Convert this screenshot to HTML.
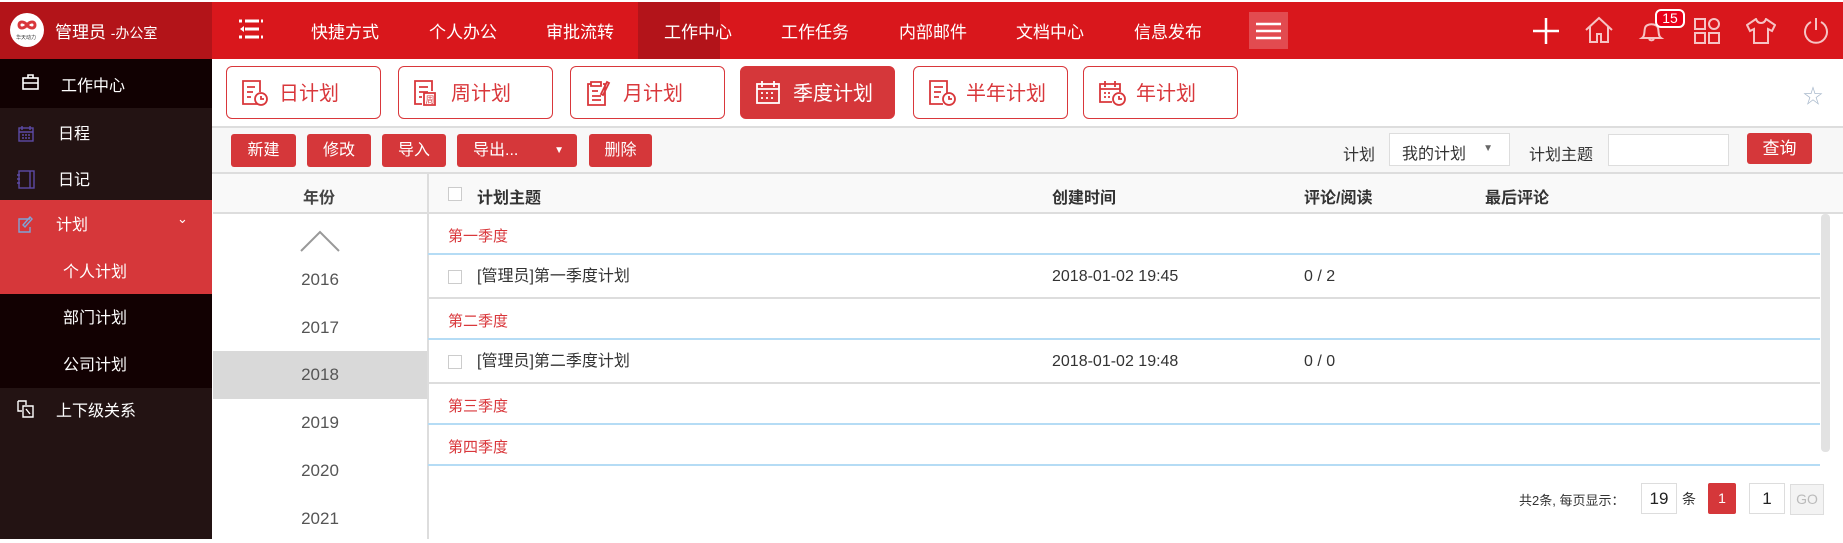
<!DOCTYPE html>
<html><head><meta charset="utf-8"><style>
*{margin:0;padding:0;box-sizing:border-box}
body{width:1843px;height:539px;overflow:hidden;background:#fff;font-family:"Liberation Sans","Noto Sans CJK SC",sans-serif;position:relative}
.a{position:absolute}
.nav{color:#fff;font-size:17px;top:18px}
.side{color:#fff;font-size:16px}
.tab{position:absolute;top:66px;height:53px;width:155px;border:1px solid #d9373b;border-radius:6px;color:#d9373b;font-size:20px;background:#fff}
.tab span{position:absolute;left:52px;top:10px}
.tab svg{position:absolute;left:14px;top:12px}
.btn{position:absolute;top:134px;height:33px;background:#d5373a;border-radius:3px;color:#fff;font-size:16px;text-align:center;line-height:33px}
.yr{position:absolute;left:213px;width:214px;text-align:center;font-size:17px;color:#555;height:48px;line-height:48px}
.grp{position:absolute;left:428px;width:1392px;color:#d9373b;font-size:15px;border-bottom:2px solid #b5dcf5}
.row{position:absolute;left:428px;width:1392px;color:#333;font-size:16px;border-bottom:2px solid #ddd}
.row span{line-height:22px}
.cb{position:absolute;width:14px;height:14px;border:1px solid #ccc;background:#fff}
</style></head><body>
<!-- top bar -->
<div class="a" style="left:0;top:2px;width:212px;height:57px;background:#b31419"></div>
<div class="a" style="left:212px;top:2px;width:1631px;height:57px;background:#d9171c"></div>
<div class="a" style="left:638px;top:2px;width:82px;height:57px;background:#b3141a"></div>
<div class="a" style="left:10px;top:13px;width:34px;height:34px;border-radius:50%;background:#fff"></div>
<svg class="a" style="left:14px;top:18px" width="26" height="14"><path d="M13 7c-3-4-8-4-8 0s5 4 8 0c3-4 8-4 8 0s-5 4-8 0" fill="none" stroke="#d9373b" stroke-width="3"/></svg>
<div class="a" style="left:16px;top:34px;font-size:5px;color:#333">华天动力</div>
<div class="a" style="left:55px;top:18px;color:#fff;font-size:17px">管理员 <span style="font-size:14px">-办公室</span></div>
<svg class="a" style="left:239px;top:19px" width="24" height="21"><g stroke="#fff" stroke-width="3"><line x1="6" y1="2" x2="20" y2="2"/><line x1="6" y1="10" x2="20" y2="10"/><line x1="6" y1="18" x2="20" y2="18"/></g><g fill="#fff"><rect x="0" y="0.5" width="3" height="3"/><rect x="22" y="0.5" width="2" height="3"/><rect x="22" y="16.5" width="2" height="3"/><rect x="0" y="16.5" width="3" height="3"/><path d="M1 10l4-3v6z"/></g></svg>
<div class="a nav" style="left:311px">快捷方式</div>
<div class="a nav" style="left:429px">个人办公</div>
<div class="a nav" style="left:546px">审批流转</div>
<div class="a nav" style="left:664px">工作中心</div>
<div class="a nav" style="left:781px">工作任务</div>
<div class="a nav" style="left:899px">内部邮件</div>
<div class="a nav" style="left:1016px">文档中心</div>
<div class="a nav" style="left:1134px">信息发布</div>
<div class="a" style="left:1249px;top:12px;width:39px;height:37px;background:#e24b50"></div>
<svg class="a" style="left:1256px;top:22px" width="25" height="18"><g stroke="#fff" stroke-width="2.4"><line x1="0" y1="2" x2="25" y2="2"/><line x1="0" y1="9" x2="25" y2="9"/><line x1="0" y1="16" x2="25" y2="16"/></g></svg>
<svg class="a" style="left:1533px;top:18px" width="26" height="26"><g stroke="#fff" stroke-width="2.5"><line x1="13" y1="0" x2="13" y2="26"/><line x1="0" y1="13" x2="26" y2="13"/></g></svg>
<svg class="a" style="left:1584px;top:16px" width="30" height="28" fill="none" stroke="#f6c3c4" stroke-width="2"><path d="M2 14L15 2l13 12M6 11v15h7v-8h4v8h7V11"/></svg>
<svg class="a" style="left:1638px;top:20px" width="30" height="24" fill="none" stroke="#f6c3c4" stroke-width="2"><path d="M4 18c3-2 2-6 3-10 1-5 12-5 13 0 1 4 0 8 3 10zM11 19a3 3 0 0 0 5 0"/></svg>
<div class="a" style="left:1655px;top:9px;width:30px;height:19px;background:#e8001a;border:2px solid #fff;border-radius:6px;color:#fff;font-size:14px;text-align:center;line-height:15px">15</div>
<svg class="a" style="left:1694px;top:18px" width="27" height="27" fill="none" stroke="#f6c3c4" stroke-width="2"><rect x="1" y="1" width="10" height="10"/><circle cx="20" cy="6" r="5"/><rect x="1" y="15" width="10" height="10"/><rect x="15" y="15" width="10" height="10"/></svg>
<svg class="a" style="left:1746px;top:18px" width="30" height="26" fill="none" stroke="#f6c3c4" stroke-width="2"><path d="M10 1l-9 6 3 6 4-2v14h14V11l4 2 3-6-9-6c-1 3-3 4-5 4s-4-1-5-4z"/></svg>
<svg class="a" style="left:1803px;top:17px" width="26" height="27" fill="none" stroke="#f6c3c4" stroke-width="2"><path d="M8 5a11 11 0 1 0 10 0M13 1v12"/></svg>
<!-- sidebar -->
<div class="a" style="left:0;top:59px;width:212px;height:480px;background:#231313"></div>
<div class="a" style="left:0;top:59px;width:212px;height:49px;background:#110102"></div>
<div class="a" style="left:0;top:200px;width:212px;height:94px;background:#d6373a"></div>
<div class="a" style="left:0;top:294px;width:212px;height:94px;background:#120102"></div>
<svg class="a" style="left:22px;top:74px" width="17" height="16" fill="none" stroke="#fff" stroke-width="1.6"><rect x="1" y="4" width="15" height="11"/><path d="M6 4V1h5v3M1 9h15"/></svg>
<div class="a side" style="left:61px;top:72px">工作中心</div>
<svg class="a" style="left:18px;top:126px" width="16" height="16" fill="none" stroke="#5c4aa5" stroke-width="1.4"><rect x="1" y="2" width="14" height="13"/><path d="M4 0v4M12 0v4M1 6h14M4 9h2M7 9h2M10 9h2M4 12h2M7 12h2M10 12h2"/></svg>
<div class="a side" style="left:58px;top:120px">日程</div>
<svg class="a" style="left:17px;top:170px" width="18" height="19" fill="none" stroke="#5c4aa5" stroke-width="1.4"><rect x="2" y="1" width="15" height="17"/><path d="M13 1v17M0 5h3M0 9h3M0 13h3"/></svg>
<div class="a side" style="left:58px;top:166px">日记</div>
<svg class="a" style="left:17px;top:216px" width="17" height="17" fill="none" stroke="#7fa3d6" stroke-width="1.4"><path d="M13 3H2v13h11v-5M6 9l7-8 2 2-7 8z"/></svg>
<div class="a side" style="left:56px;top:211px">计划</div>
<div class="a" style="left:177px;top:211px;color:#fff;font-size:13px">⌄</div>
<div class="a side" style="left:63px;top:258px">个人计划</div>
<div class="a side" style="left:63px;top:304px">部门计划</div>
<div class="a side" style="left:63px;top:351px">公司计划</div>
<svg class="a" style="left:17px;top:400px" width="17" height="18" fill="none" stroke="#fff" stroke-width="1.4"><path d="M1 1h8v4M1 1v10h4M6 6h10v11H6zM9 9l4 5"/></svg>
<div class="a side" style="left:56px;top:397px">上下级关系</div>
<!-- tabs -->
<div class="tab" style="left:226px"><svg width="28" height="28" fill="none" stroke="#d9373b" stroke-width="1.8"><path d="M17 25H2V2h17v11M6 8h8M6 13h6M6 18h4"/><circle cx="20" cy="20" r="6"/><path d="M20 17v3h3"/></svg><span>日计划</span></div>
<div class="tab" style="left:398px"><svg width="28" height="28" fill="none" stroke="#d9373b" stroke-width="1.8"><path d="M9 25H2V2h17v10M6 8h9M6 13h9M6 18h3M11 14h11v12h-11z"/><text x="12.5" y="24" font-size="9" fill="#d9373b" stroke="none">周</text></svg><span>周计划</span></div>
<div class="tab" style="left:570px"><svg width="28" height="28" fill="none" stroke="#d9373b" stroke-width="1.8"><path d="M18 5h2v21H3V5h3M6 3h10v4H6zM7 12h6M7 17h9M7 21h9M16 15l6-12 2 1-6 12z"/></svg><span>月计划</span></div>
<div class="tab" style="left:740px;background:#d5373a;color:#fff"><svg width="28" height="28" fill="none" stroke="#fff" stroke-width="1.8"><rect x="2" y="5" width="22" height="19"/><path d="M7 2v6M19 2v6M2 10h22M6 14h2M11 14h2M16 14h2M6 19h2M11 19h2M16 19h2"/></svg><span>季度计划</span></div>
<div class="tab" style="left:913px"><svg width="28" height="28" fill="none" stroke="#d9373b" stroke-width="1.8"><path d="M15 25H2V2h17v12M6 8h9M6 13h7M6 18h5"/><circle cx="21" cy="20" r="6"/><path d="M21 17v3h3"/></svg><span>半年计划</span></div>
<div class="tab" style="left:1083px"><svg width="28" height="28" fill="none" stroke="#d9373b" stroke-width="1.8"><path d="M14 23H2V5h20v8M7 2v6M17 2v6M2 10h20M6 14h2M10 14h2M6 18h2M10 18h2"/><circle cx="21" cy="20" r="6"/><path d="M21 17v3h3"/></svg><span style="left:52px">年计划</span></div>
<div class="a" style="left:1803px;top:80px;color:#a9b9cc;font-size:20px">☆</div>
<!-- toolbar -->
<div class="a" style="left:212px;top:126px;width:1631px;height:48px;background:#f7f7f7;border-top:2px solid #ddd;border-bottom:2px solid #ddd"></div>
<div class="btn" style="left:231px;width:65px">新建</div>
<div class="btn" style="left:307px;width:64px">修改</div>
<div class="btn" style="left:382px;width:64px">导入</div>
<div class="btn" style="left:457px;width:120px;text-align:left;padding-left:16px">导出...<span style="position:absolute;right:13px;top:0;font-size:10px">▼</span></div>
<div class="btn" style="left:589px;width:63px">删除</div>
<div class="a" style="left:1343px;top:141px;font-size:16px;color:#333">计划</div>
<div class="a" style="left:1389px;top:133px;width:121px;height:33px;border:1px solid #ddd;background:#fff;font-size:16px;color:#333;padding:6px 0 0 12px">我的计划<span style="position:absolute;right:16px;top:9px;font-size:10px;color:#666">▼</span></div>
<div class="a" style="left:1529px;top:141px;font-size:16px;color:#333">计划主题</div>
<div class="a" style="left:1608px;top:134px;width:121px;height:32px;border:1px solid #ddd;background:#fff"></div>
<div class="btn" style="left:1747px;top:133px;width:65px;height:31px;line-height:31px;font-size:17px">查询</div>
<!-- year column -->
<div class="a" style="left:213px;top:174px;width:215px;height:40px;background:#f9f9f9;border-bottom:2px solid #ddd"></div>
<div class="a" style="left:303px;top:184px;font-size:16px;font-weight:bold;color:#444">年份</div>
<div class="a" style="left:427px;top:174px;width:2px;height:365px;background:#ddd"></div>
<svg class="a" style="left:300px;top:230px" width="40" height="22"><path d="M1 21L20 2l19 19" fill="none" stroke="#999" stroke-width="2"/></svg>
<div class="yr" style="top:256px">2016</div>
<div class="yr" style="top:304px">2017</div>
<div class="yr" style="top:351px;background:#d9d9d9">2018</div>
<div class="yr" style="top:399px">2019</div>
<div class="yr" style="top:447px">2020</div>
<div class="yr" style="top:495px">2021</div>
<!-- table -->
<div class="a" style="left:429px;top:174px;width:1414px;height:40px;background:#f9f9f9;border-bottom:2px solid #ddd"></div>
<div class="cb" style="left:448px;top:187px"></div>
<div class="a" style="left:477px;top:184px;font-size:16px;font-weight:bold;color:#333">计划主题</div>
<div class="a" style="left:1052px;top:184px;font-size:16px;font-weight:bold;color:#333">创建时间</div>
<div class="a" style="left:1304px;top:184px;font-size:16px;font-weight:bold;color:#333">评论/阅读</div>
<div class="a" style="left:1485px;top:184px;font-size:16px;font-weight:bold;color:#333">最后评论</div>
<div class="grp" style="top:214px;height:41px"><span style="position:absolute;left:20px;top:11px">第一季度</span></div>
<div class="row" style="top:255px;height:44px"><div class="cb" style="left:20px;top:15px"></div><span style="position:absolute;left:49px;top:11px">[管理员]第一季度计划</span><span style="position:absolute;left:624px;top:11px">2018-01-02 19:45</span><span style="position:absolute;left:876px;top:11px">0 / 2</span></div>
<div class="grp" style="top:299px;height:41px"><span style="position:absolute;left:20px;top:11px">第二季度</span></div>
<div class="row" style="top:340px;height:44px"><div class="cb" style="left:20px;top:15px"></div><span style="position:absolute;left:49px;top:11px">[管理员]第二季度计划</span><span style="position:absolute;left:624px;top:11px">2018-01-02 19:48</span><span style="position:absolute;left:876px;top:11px">0 / 0</span></div>
<div class="grp" style="top:384px;height:41px"><span style="position:absolute;left:20px;top:11px">第三季度</span></div>
<div class="grp" style="top:425px;height:41px"><span style="position:absolute;left:20px;top:11px">第四季度</span></div>
<div class="a" style="left:1821px;top:214px;width:9px;height:238px;background:#e2e2e2;border-radius:4px"></div>
<!-- pagination -->
<div class="a" style="left:1519px;top:490px;font-size:13px;color:#333">共2条, 每页显示：</div>
<div class="a" style="left:1641px;top:483px;width:36px;height:31px;border:1px solid #ddd;font-size:17px;text-align:center;line-height:29px;color:#222">19</div>
<div class="a" style="left:1682px;top:489px;font-size:14px;color:#333">条</div>
<div class="a" style="left:1708px;top:483px;width:28px;height:31px;background:#d5373a;border-radius:2px;color:#fff;font-size:14px;text-align:center;line-height:31px">1</div>
<div class="a" style="left:1749px;top:483px;width:36px;height:31px;border:1px solid #ddd;font-size:17px;text-align:center;line-height:29px;color:#222">1</div>
<div class="a" style="left:1790px;top:484px;width:34px;height:31px;border:1px solid #ddd;background:#f3f3f3;font-size:14px;text-align:center;line-height:29px;color:#bbb">GO</div>
</body></html>
